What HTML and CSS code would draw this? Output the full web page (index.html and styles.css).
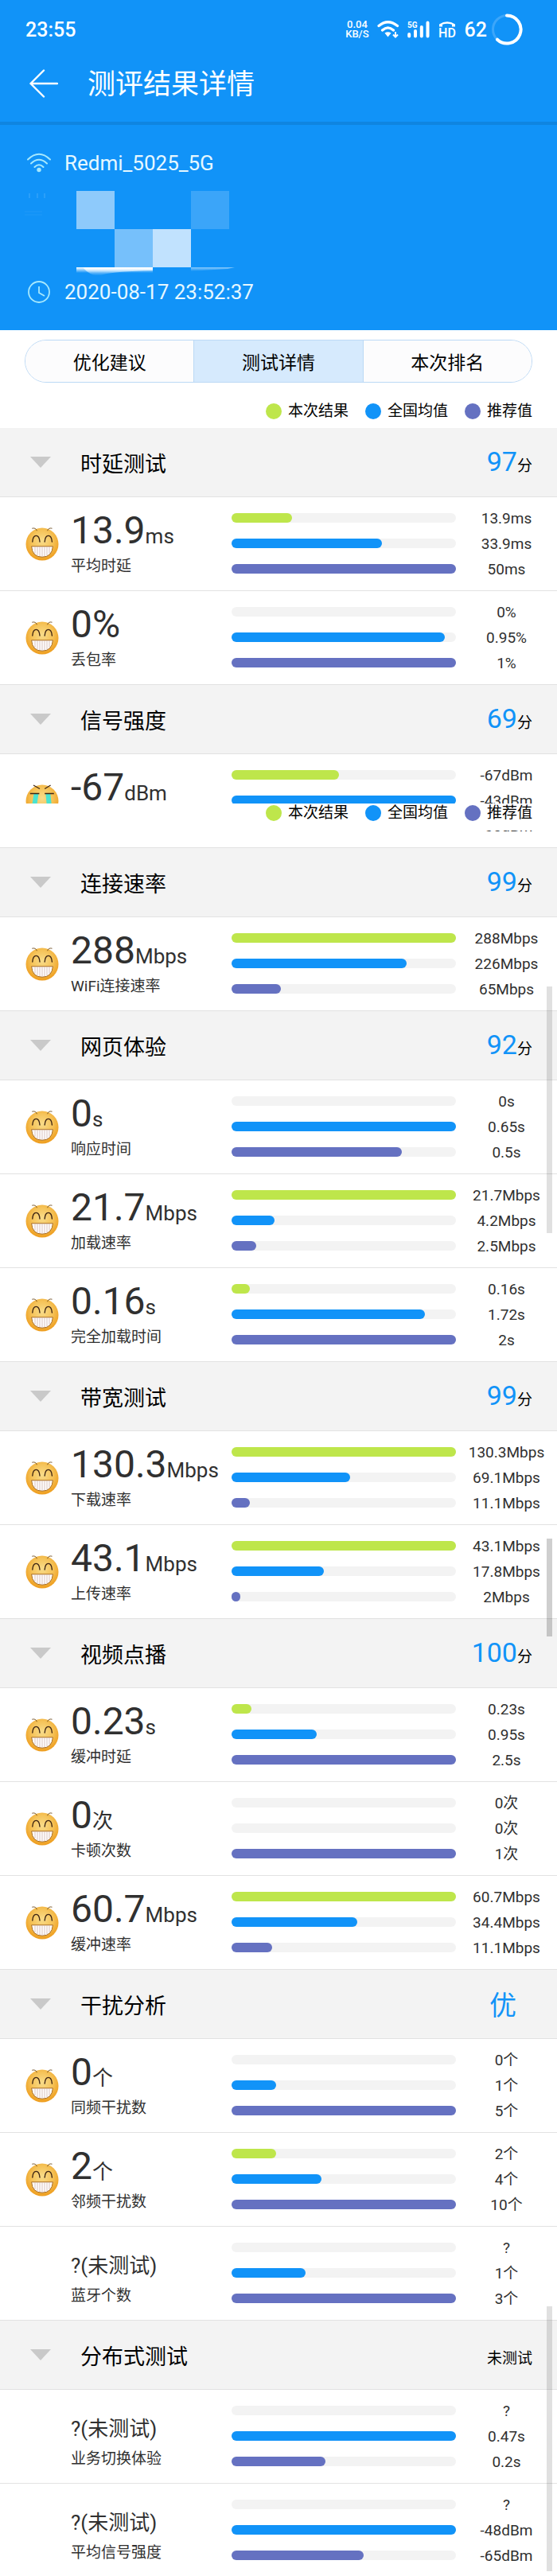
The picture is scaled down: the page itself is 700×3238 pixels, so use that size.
FILE: index.html
```
<!DOCTYPE html>
<html lang="zh-CN">
	<head>
	<meta charset="utf-8"/>
	<meta name="viewport" content="width=device-width, initial-scale=1.0"/>
	<title>测评结果详情</title>
	<link rel="stylesheet" href="styles.css">
	</head>
	<body>

		<!-- shared faces -->
		<svg class="defs" width="0" height="0" aria-hidden="true">
			<defs>
				<radialGradient id="skin" cx="0.5" cy="0.4" r="0.6">
					<stop offset="0" stop-color="#f8dc8a"/>
					<stop offset="0.55" stop-color="#f5c257"/>
					<stop offset="1" stop-color="#ee9c1c"/>
				</radialGradient>
			</defs>
			<symbol id="happy" viewBox="0 0 42 42">
				<circle cx="21" cy="21" r="20.5" fill="url(#skin)"/>
				<path d="M8.3 1.2Q13 0 14.4 4.2M33.5 1.2Q29 0 27.6 4.2" fill="none" stroke="#6b4a1c" stroke-width="0.9"/>
				<path d="M8.8 18Q9.4 10.4 13.4 10.4Q17.4 10.4 18 18M24.2 18Q24.8 10.4 28.8 10.4Q32.8 10.4 33.4 18" fill="none" stroke="#3d2413" stroke-width="1.4" stroke-linecap="round"/>
				<path d="M7.6 23.8H34.4Q33.4 37.2 21 37.2Q8.6 37.2 7.6 23.8Z" fill="#fff" stroke="#a8691c" stroke-width="1"/>
				<path d="M12 24.4V33M15 24.4V35.4M18 24.4V36.4M21 24.4V36.6M24 24.4V36.4M27 24.4V35.4M30 24.4V33" stroke="#c9a7a0" stroke-width="0.7"/>
			</symbol>
			<symbol id="cry" viewBox="0 0 42 42">
				<circle cx="21" cy="21" r="20.5" fill="url(#skin)"/>
				<path d="M10.5 12H16.4L14 28H8Z M25.4 12H31.4L33 28H27Z" fill="#4be3d0"/>
				<path d="M10 0.9L18 5.6M24.2 5.6L31.6 0.9" stroke="#3d2413" stroke-width="1.2"/>
				<path d="M5.8 11.5H17.4M24.2 11.5H35.8" stroke="#3d2413" stroke-width="1.4"/>
			</symbol>
		</svg>

		<header class="top">
			<div class="status">
				<span class="clock">23:55</span>
				<div class="status-icons">
					<span class="net">0.04<br>KB/S</span>
					<svg class="s-wifi" width="28" height="22" viewBox="0 0 28 22">
						<path d="M2 6.5Q13.5 -3 25.5 6.5M6.5 12Q13.5 5.8 20.5 12" fill="none" stroke="#fff" stroke-width="3.2" stroke-linecap="round"/>
						<path d="M9.5 15.5Q13.5 12.8 17.5 15.5L13.5 20.5Z" fill="#fff"/>
						<path d="M23 14V20M20 17.5L23 20.5L26 17.5" fill="none" stroke="#fff" stroke-width="2"/>
					</svg>
					<svg class="s-signal" width="28" height="22" viewBox="0 0 28 22">
						<path d="M2.2 17V19.5M10 13V19.5M17.8 8V19.5M25.5 2.5V19.5" stroke="#fff" stroke-width="4" stroke-linecap="round"/>
						<text x="0" y="9" class="tiny">5G</text>
					</svg>
					<svg class="s-hd" width="24" height="24" viewBox="0 0 24 24">
						<path d="M2 8.5V5.5Q12 -1 22 5.5V8.5H18V5.8Q12 3.6 6 5.8V8.5Z" fill="#fff"/>
						<text x="12" y="22" text-anchor="middle" class="hd">HD</text>
					</svg>
					<span class="battery">62</span>
					<svg class="s-ring" width="40" height="40" viewBox="0 0 40 40">
						<circle cx="20" cy="20" r="17.5" fill="none" stroke="#3ca6fa" stroke-width="3"/>
						<path d="M20 2.5A17.5 17.5 0 1 1 8 32.7" fill="none" stroke="#fff" stroke-width="4" stroke-linecap="round"/>
					</svg>
				</div>
			</div>
			<div class="bar">
				<a class="back" href="#" aria-label="返回">
					<svg width="36" height="36" viewBox="0 0 36 36"><path d="M18 1.5L1.5 18L18 34.5M1.5 18H35" fill="none" stroke="#fff" stroke-width="2.4" stroke-linecap="round" stroke-linejoin="round"/></svg>
				</a>
				<h1>测评结果详情</h1>
			</div>
		</header>

		<div class="info">
			<div class="info-line">
				<svg width="30" height="30" viewBox="0 0 30 30">
					<path d="M1 10.5Q15 -3 29 10.5M5 15.5Q15 6 25 15.5M9.5 20Q15 14.5 20.5 20" fill="none" stroke="#a6e8fd" stroke-width="2" stroke-linecap="round"/>
					<circle cx="15" cy="23.5" r="2.7" fill="#a6e8fd"/>
				</svg>
				<span>Redmi_5025_5G</span>
			</div>
			<svg class="mosaic" width="320" height="112" viewBox="0 0 320 112">
				<defs>
					<linearGradient id="smear" x1="0" y1="0" x2="0" y2="1">
						<stop offset="0" stop-color="#fff"/>
						<stop offset="1" stop-color="#fff" stop-opacity="0"/>
					</linearGradient>
				</defs>
				<path d="M37 3V9M47 3V9M56 3V9" stroke="#45aafa" stroke-width="1"/>
				<path d="M31 26H53M31 30H53" stroke="#2099f8" stroke-width="1"/>
				<rect x="96" y="0" width="48" height="48" fill="#8ecafb"/>
				<rect x="240" y="0" width="48" height="48" fill="#3ba5f9"/>
				<rect x="144" y="48" width="48" height="48" fill="#76c0fb"/>
				<rect x="192" y="48" width="48" height="48" fill="#c1e2fe"/>
				<rect x="96" y="96" width="96" height="7" fill="url(#smear)"/>
				<path d="M104 96Q116 110 130 105Q145 101 192 100V96Z" fill="url(#smear)"/>
				<path d="M240 96H295L286 98L240 101Z" fill="url(#smear)" opacity="0.5"/>
			</svg>
			<div class="info-line">
				<svg width="30" height="30" viewBox="0 0 30 30"><path d="M15 8V16L22 20" fill="none" stroke="#a6e8fd" stroke-width="1.8"/><circle cx="15" cy="15" r="13" fill="none" stroke="#a6e8fd" stroke-width="1.8"/></svg>
				<span>2020-08-17 23:52:37</span>
			</div>
		</div>

		<nav class="tabs">
			<button type="button">优化建议</button>
			<button type="button" class="active">测试详情</button>
			<button type="button">本次排名</button>
		</nav>

		<main>
			<div class="legend">
				<span class="key now">本次结果</span>
				<span class="key avg">全国均值</span>
				<span class="key rec">推荐值</span>
			</div>

			<section>
				<button type="button" class="head"><span class="title">时延测试</span><span class="score">97<small>分</small></span></button>
				<div class="row">
					<div class="result"><svg class="face"><use href="#happy"/></svg><div><p class="value">13.9<small>ms</small></p><p class="label">平均时延</p></div></div>
					<div class="bars">
						<div class="line"><div class="track"><div class="fill now" style="width:27%"></div></div><span>13.9ms</span></div>
						<div class="line"><div class="track"><div class="fill avg" style="width:67%"></div></div><span>33.9ms</span></div>
						<div class="line"><div class="track"><div class="fill rec" style="width:100%"></div></div><span>50ms</span></div>
					</div>
				</div>
				<div class="row">
					<div class="result"><svg class="face"><use href="#happy"/></svg><div><p class="value">0%</p><p class="label">丢包率</p></div></div>
					<div class="bars">
						<div class="line"><div class="track"></div><span>0%</span></div>
						<div class="line"><div class="track"><div class="fill avg" style="width:95%"></div></div><span>0.95%</span></div>
						<div class="line"><div class="track"><div class="fill rec" style="width:100%"></div></div><span>1%</span></div>
					</div>
				</div>
			</section>

			<section>
				<button type="button" class="head"><span class="title">信号强度</span><span class="score">69<small>分</small></span></button>
				<div class="row">
					<div class="result"><svg class="face"><use href="#cry"/></svg><div><p class="value">-67<small>dBm</small></p></div></div>
					<div class="bars">
						<div class="line"><div class="track"><div class="fill now" style="width:48%"></div></div><span>-67dBm</span></div>
						<div class="line"><div class="track"><div class="fill avg" style="width:100%"></div></div><span>-43dBm</span></div>
						<div class="line"><div class="track"></div><span>-65dBm</span></div>
					</div>
					<!-- sticky legend passing over the row -->
					<div class="legend floating">
						<span class="key now">本次结果</span>
						<span class="key avg">全国均值</span>
						<span class="key rec">推荐值</span>
					</div>
				</div>
			</section>

			<section>
				<button type="button" class="head"><span class="title">连接速率</span><span class="score">99<small>分</small></span></button>
				<div class="row">
					<div class="result"><svg class="face"><use href="#happy"/></svg><div><p class="value">288<small>Mbps</small></p><p class="label">WiFi连接速率</p></div></div>
					<div class="bars">
						<div class="line"><div class="track"><div class="fill now" style="width:100%"></div></div><span>288Mbps</span></div>
						<div class="line"><div class="track"><div class="fill avg" style="width:78%"></div></div><span>226Mbps</span></div>
						<div class="line"><div class="track"><div class="fill rec" style="width:22%"></div></div><span>65Mbps</span></div>
					</div>
				</div>
				<i class="thumb first"></i>
			</section>

			<section>
				<button type="button" class="head"><span class="title">网页体验</span><span class="score">92<small>分</small></span></button>
				<div class="row">
					<div class="result"><svg class="face"><use href="#happy"/></svg><div><p class="value">0<small>s</small></p><p class="label">响应时间</p></div></div>
					<div class="bars">
						<div class="line"><div class="track"></div><span>0s</span></div>
						<div class="line"><div class="track"><div class="fill avg" style="width:100%"></div></div><span>0.65s</span></div>
						<div class="line"><div class="track"><div class="fill rec" style="width:76%"></div></div><span>0.5s</span></div>
					</div>
				</div>
				<div class="row">
					<div class="result"><svg class="face"><use href="#happy"/></svg><div><p class="value">21.7<small>Mbps</small></p><p class="label">加载速率</p></div></div>
					<div class="bars">
						<div class="line"><div class="track"><div class="fill now" style="width:100%"></div></div><span>21.7Mbps</span></div>
						<div class="line"><div class="track"><div class="fill avg" style="width:19%"></div></div><span>4.2Mbps</span></div>
						<div class="line"><div class="track"><div class="fill rec" style="width:11%"></div></div><span>2.5Mbps</span></div>
					</div>
				</div>
				<div class="row">
					<div class="result"><svg class="face"><use href="#happy"/></svg><div><p class="value">0.16<small>s</small></p><p class="label">完全加载时间</p></div></div>
					<div class="bars">
						<div class="line"><div class="track"><div class="fill now" style="width:8%"></div></div><span>0.16s</span></div>
						<div class="line"><div class="track"><div class="fill avg" style="width:86%"></div></div><span>1.72s</span></div>
						<div class="line"><div class="track"><div class="fill rec" style="width:100%"></div></div><span>2s</span></div>
					</div>
				</div>
			</section>

			<section>
				<button type="button" class="head"><span class="title">带宽测试</span><span class="score">99<small>分</small></span></button>
				<div class="row">
					<div class="result"><svg class="face"><use href="#happy"/></svg><div><p class="value">130.3<small>Mbps</small></p><p class="label">下载速率</p></div></div>
					<div class="bars">
						<div class="line"><div class="track"><div class="fill now" style="width:100%"></div></div><span>130.3Mbps</span></div>
						<div class="line"><div class="track"><div class="fill avg" style="width:53%"></div></div><span>69.1Mbps</span></div>
						<div class="line"><div class="track"><div class="fill rec" style="width:8%"></div></div><span>11.1Mbps</span></div>
					</div>
				</div>
				<div class="row">
					<div class="result"><svg class="face"><use href="#happy"/></svg><div><p class="value">43.1<small>Mbps</small></p><p class="label">上传速率</p></div></div>
					<div class="bars">
						<div class="line"><div class="track"><div class="fill now" style="width:100%"></div></div><span>43.1Mbps</span></div>
						<div class="line"><div class="track"><div class="fill avg" style="width:41%"></div></div><span>17.8Mbps</span></div>
						<div class="line"><div class="track"><div class="fill rec" style="width:4%"></div></div><span>2Mbps</span></div>
					</div>
				</div>
				<i class="thumb second"></i>
			</section>

			<section>
				<button type="button" class="head"><span class="title">视频点播</span><span class="score">100<small>分</small></span></button>
				<div class="row">
					<div class="result"><svg class="face"><use href="#happy"/></svg><div><p class="value">0.23<small>s</small></p><p class="label">缓冲时延</p></div></div>
					<div class="bars">
						<div class="line"><div class="track"><div class="fill now" style="width:9%"></div></div><span>0.23s</span></div>
						<div class="line"><div class="track"><div class="fill avg" style="width:38%"></div></div><span>0.95s</span></div>
						<div class="line"><div class="track"><div class="fill rec" style="width:100%"></div></div><span>2.5s</span></div>
					</div>
				</div>
				<div class="row">
					<div class="result"><svg class="face"><use href="#happy"/></svg><div><p class="value">0<small>次</small></p><p class="label">卡顿次数</p></div></div>
					<div class="bars">
						<div class="line"><div class="track"></div><span>0次</span></div>
						<div class="line"><div class="track"></div><span>0次</span></div>
						<div class="line"><div class="track"><div class="fill rec" style="width:100%"></div></div><span>1次</span></div>
					</div>
				</div>
				<div class="row">
					<div class="result"><svg class="face"><use href="#happy"/></svg><div><p class="value">60.7<small>Mbps</small></p><p class="label">缓冲速率</p></div></div>
					<div class="bars">
						<div class="line"><div class="track"><div class="fill now" style="width:100%"></div></div><span>60.7Mbps</span></div>
						<div class="line"><div class="track"><div class="fill avg" style="width:56%"></div></div><span>34.4Mbps</span></div>
						<div class="line"><div class="track"><div class="fill rec" style="width:18%"></div></div><span>11.1Mbps</span></div>
					</div>
				</div>
			</section>

			<section>
				<button type="button" class="head"><span class="title">干扰分析</span><span class="score grade">优</span></button>
				<div class="row">
					<div class="result"><svg class="face"><use href="#happy"/></svg><div><p class="value">0<small>个</small></p><p class="label">同频干扰数</p></div></div>
					<div class="bars">
						<div class="line"><div class="track"></div><span>0个</span></div>
						<div class="line"><div class="track"><div class="fill avg" style="width:20%"></div></div><span>1个</span></div>
						<div class="line"><div class="track"><div class="fill rec" style="width:100%"></div></div><span>5个</span></div>
					</div>
				</div>
				<div class="row">
					<div class="result"><svg class="face"><use href="#happy"/></svg><div><p class="value">2<small>个</small></p><p class="label">邻频干扰数</p></div></div>
					<div class="bars">
						<div class="line"><div class="track"><div class="fill now" style="width:20%"></div></div><span>2个</span></div>
						<div class="line"><div class="track"><div class="fill avg" style="width:40%"></div></div><span>4个</span></div>
						<div class="line"><div class="track"><div class="fill rec" style="width:100%"></div></div><span>10个</span></div>
					</div>
				</div>
				<div class="row">
					<div class="result"><span class="face"></span><div><p class="value"><small>?(未测试)</small></p><p class="label">蓝牙个数</p></div></div>
					<div class="bars">
						<div class="line"><div class="track"></div><span>?</span></div>
						<div class="line"><div class="track"><div class="fill avg" style="width:33%"></div></div><span>1个</span></div>
						<div class="line"><div class="track"><div class="fill rec" style="width:100%"></div></div><span>3个</span></div>
					</div>
				</div>
			</section>

			<section>
				<button type="button" class="head"><span class="title">分布式测试</span><span class="score"><small>未测试</small></span></button>
				<div class="row">
					<div class="result"><span class="face"></span><div><p class="value"><small>?(未测试)</small></p><p class="label">业务切换体验</p></div></div>
					<div class="bars">
						<div class="line"><div class="track"></div><span>?</span></div>
						<div class="line"><div class="track"><div class="fill avg" style="width:100%"></div></div><span>0.47s</span></div>
						<div class="line"><div class="track"><div class="fill rec" style="width:42%"></div></div><span>0.2s</span></div>
					</div>
				</div>
				<div class="row">
					<div class="result"><span class="face"></span><div><p class="value"><small>?(未测试)</small></p><p class="label">平均信号强度</p></div></div>
					<div class="bars">
						<div class="line"><div class="track"></div><span>?</span></div>
						<div class="line"><div class="track"><div class="fill avg" style="width:100%"></div></div><span>-48dBm</span></div>
						<div class="line"><div class="track"><div class="fill rec" style="width:59%"></div></div><span>-65dBm</span></div>
					</div>
				</div>
				<i class="thumb third"></i>
			</section>
		</main>
	</body>
</html>
```

FILE: styles.css
```
	* {
		box-sizing: border-box;
	}

	body {
		margin: 0;
		background-color: #ffffff;
		color: #303030;
		font-family: Roboto, "Noto Sans CJK SC", sans-serif;
		font-size: 19px;
	}

	h1, p {
		margin: 0;
		font-weight: 400;
	}

	button {
		margin: 0;
		padding: 0;
		border: 0;
		font-family: inherit;
		color: #000000;
	}

	svg {
		display: block;
		flex: none;
	}

	.defs {
		position: absolute;
	}

	/* blue header */
	.top, .info {
		background-color: #1193f8;
		color: #ffffff;
	}

	.status {
		display: flex;
		justify-content: space-between;
		align-items: center;
		height: 74px;
		padding: 0 43px 0 32px;
		font-size: 25px;
		font-weight: 500;
	}

	.status-icons {
		display: flex;
		align-items: center;
		gap: 10px;
	}

	.net {
		font-size: 13px;
		line-height: 12px;
		text-align: center;
	}

	.tiny {
		font-size: 10px;
		font-weight: 700;
		fill: #ffffff;
	}

	.hd {
		font-size: 16px;
		font-weight: 500;
		fill: #ffffff;
	}

	.s-ring {
		margin-left: -5px;
	}

	.bar {
		display: flex;
		align-items: center;
		gap: 37px;
		height: 62px;
		padding-left: 37px;
		margin-bottom: 17px;
	}

	.top {
		display: flow-root;
	}

	h1 {
		font-size: 35px;
		line-height: 52px;
		padding-top: 3px;
	}

	.info {
		padding: 33px 0 33px;
		border-top: 4px solid #0f85e0;
		color: #e6f8ff;
		font-size: 26px;
	}

	.info-line {
		display: flex;
		align-items: center;
		gap: 17px;
		height: 30px;
		padding-left: 34px;
	}

	.mosaic {
		margin-top: 20px;
	}

	/* tabs */
	.tabs {
		display: flex;
		height: 54px;
		margin: 12px 31px 0;
		border: 1px solid #bcd9f5;
		border-radius: 27px;
		overflow: hidden;
	}

	.tabs button {
		flex: 1;
		background-color: #fcfcfd;
		font-size: 23px;
	}

	.tabs button.active {
		background-color: #d6eafd;
		border-left: 1px solid #bcd9f5;
		border-right: 1px solid #bcd9f5;
	}

	.legend {
		display: flex;
		justify-content: flex-end;
		gap: 21px;
		padding: 22px 31px 7px;
		color: #000000;
		line-height: 28px;
	}

	.key {
		display: flex;
		align-items: center;
		gap: 8px;
	}

	.key::before {
		content: "";
		width: 20px;
		height: 20px;
		border-radius: 50%;
	}

	.now::before, .fill.now {
		background-color: #bee64b;
	}

	.avg::before, .fill.avg {
		background-color: #1193f8;
	}

	.rec::before, .fill.rec {
		background-color: #6571c1;
	}

	.legend.floating {
		position: absolute;
		top: 62px;
		left: 0;
		right: 0;
		height: 34px;
		padding: 0 31px;
		background-color: #ffffff;
		line-height: 24px;
		align-items: flex-start;
	}

	/* sections */
	section {
		position: relative;
	}

	.head {
		display: flex;
		align-items: center;
		width: 100%;
		height: 87px;
		padding: 0 31px 0 38px;
		background-color: #f3f3f3;
		border-bottom: 1px solid #e2e2e2;
		text-align: left;
	}

	.head::before {
		content: "";
		margin-right: 37px;
		border: 13px solid transparent;
		border-top: 14px solid #c9c9c9;
		border-bottom: 0;
	}

	.title {
		flex: 1;
		font-size: 27px;
	}

	.score {
		padding-top: 4px;
		color: #1193f8;
		font-size: 34px;
		line-height: 48px;
	}

	.score small {
		color: #000000;
		font-size: 19px;
	}

	.grade {
		padding-right: 20px;
	}

	.row {
		position: relative;
		display: grid;
		grid-template-columns: 291px 1fr;
		height: 118px;
		border-bottom: 1px solid #e2e2e2;
	}

	section:last-child .row:last-of-type {
		height: 116px;
		border-bottom: 0;
	}

	.result {
		display: flex;
		align-items: flex-start;
		gap: 15px;
		padding: 14px 0 0 32px;
	}

	.face {
		flex: none;
		width: 42px;
		height: 42px;
		margin-top: 24px;
	}

	.value {
		font-size: 48px;
		line-height: 56px;
		white-space: nowrap;
	}

	.value small {
		font-size: 26px;
		line-height: 1;
	}

	.label {
		margin-top: 5px;
		line-height: 24px;
	}

	.bars {
		padding-top: 10px;
	}

	.line {
		display: grid;
		grid-template-columns: 1fr 127px;
		align-items: center;
		height: 32px;
	}

	.line span {
		padding-top: 2px;
		line-height: 24px;
		text-align: center;
	}

	.track {
		height: 12px;
		border-radius: 6px;
		background-color: #f3f3f3;
	}

	.fill {
		height: 12px;
		border-radius: 6px;
	}

	/* scroll thumbs drawn over the list */
	.thumb {
		position: absolute;
		right: 6px;
		z-index: 1;
		width: 7px;
		background-color: rgba(0,0,0,0.12);
	}

	.thumb.first {
		top: 174px;
		height: 310px;
	}

	.thumb.second {
		top: 222px;
		height: 123px;
		background-color: rgba(0,0,0,0.19);
	}

	.thumb.third {
		top: -18px;
		bottom: 6px;
	}
```
